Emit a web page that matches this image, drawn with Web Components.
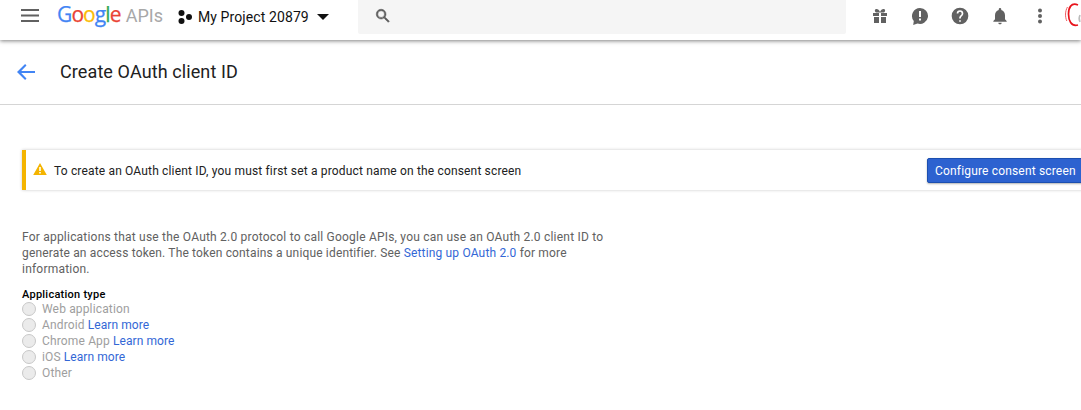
<!DOCTYPE html>
<html>
<head>
<meta charset="utf-8">
<title>Create OAuth client ID</title>
<style>
    html, body { margin: 0; height: 410px; overflow: hidden; background: #fff; }
    body { font-family: Roboto, sans-serif; color: #212121; }
</style>
</head>
<body>
<app-bar></app-bar>
<page-title>Create OAuth client ID</page-title>
<warning-notice>To create an OAuth client ID, you must first set a product name on the consent screen</warning-notice>
<client-form></client-form>

<script>
class AppBar extends HTMLElement
{
    constructor(){
        super();
        this.attachShadow({mode:"open"});
    }

    getStyles(){
        return `
        <style>
            :host {
                display: flex;
                align-items: flex-start;
                height: 40px;
                background: #fff;
                box-shadow: 0 1px 4px rgba(0,0,0,.5);
                position: relative;
            }
            svg { display: block; fill: #616161; }
            .menu { margin: 6px 0 0 20px; width: 20px; height: 20px; }
            .logo {
                margin: 0 0 0 17px;
                width: 106px;
                font: 21px/29px "Open Sans", sans-serif;
                -webkit-text-stroke: .25px;
                letter-spacing: -.9px;
                white-space: nowrap;
            }
            .b { color: #4285f4; } .r { color: #ea4335; } .y { color: #fbbc05; } .g { color: #34a853; }
            .apis { color: #a8a8a8; font: 18px/29px Roboto, sans-serif; -webkit-text-stroke: 0; letter-spacing: 0; margin-left: 5px; }
            .project {
                display: flex;
                align-items: center;
                height: 34px;
                margin-left: 15px;
                width: 180px;
                font-size: 14px;
                letter-spacing: .1px;
                color: #111;
            }
            .project svg { fill: #111; margin-right: 6px; }
            .caret { width: 0; height: 0; margin-left: 8px; border: 6px solid transparent; border-top: 6px solid #111; border-bottom: 0; }
            .search {
                width: 488px;
                height: 34px;
                background: #f5f5f5;
                box-sizing: border-box;
                padding: 7px 0 0 16px;
                border-radius: 0 0 2px 2px;
            }
            .search svg { fill: #5a5a5a; stroke: #5a5a5a; stroke-width: .7; }
            .icons { display: flex; margin-left: 24px; gap: 20px; padding-top: 6px; }
            .avatar { position: absolute; right: 0; top: 0; fill: none; }
        </style>
        `;
    }

    getTemplate(){
        let template = document.createElement("template");
        template.innerHTML =
        `
        <svg class="menu" viewBox="0 0 20 20"><path d="M1 3h18v2H1zM1 8.500h18v2H1zM1 14h18v2H1z"/></svg>
        <div class="logo"><span class="b">G</span><span class="r">o</span><span class="y">o</span><span class="b">g</span><span class="g">l</span><span class="r">e</span><span class="apis">APIs</span></div>
        <div class="project">
            <svg width="14" height="14" viewBox="0 0 14 14"><circle cx="3.500" cy="3" r="3"/><circle cx="3.500" cy="11" r="3"/><circle cx="11" cy="7" r="3"/></svg>
            My Project 20879
            <span class="caret"></span>
        </div>
        <div class="search">
            <svg width="18" height="18" viewBox="0 0 24 24"><path d="M15.500 14h-.79l-.28-.27A6.470 6.470 0 0 0 16 9.500 6.500 6.500 0 1 0 9.500 16c1.610 0 3.090-.59 4.230-1.570l.27.28v.79l5 4.990L20.490 19l-4.990-5zm-6 0a4.500 4.500 0 1 1 0-9 4.500 4.500 0 0 1 0 9z"/></svg>
        </div>
        <div class="icons">
            <svg width="20" height="20" viewBox="0 0 20 20"><path d="M3 7h6v3H3zM11 7h6v3h-6zM4 11h5v6H4zM11 11h5v6h-5zM6.500 3c1.500 0 2.700 1.200 3.500 3 .8-1.800 2-3 3.500-3 2 0 2.200 2.600.5 3.500H6C4.300 5.600 4.500 3 6.500 3z"/></svg>
            <svg width="20" height="20" viewBox="0 0 20 20"><path d="M10 2a8 8 0 1 1-2.500 15.600L3.200 19l.6-4A8 8 0 0 1 10 2zM9 5v6h2V5zm0 7.500v2h2v-2z" fill-rule="evenodd"/></svg>
            <svg width="20" height="20" viewBox="0 0 24 24"><path d="M12 2a10 10 0 1 0 0 20 10 10 0 0 0 0-20zm1 17h-2v-2h2v2zm2.070-7.750-.9.920C13.450 12.900 13 13.500 13 15h-2v-.5c0-1.100.45-2.100 1.170-2.830l1.240-1.260c.37-.36.59-.86.59-1.410a2 2 0 0 0-4 0H8a4 4 0 0 1 8 0c0 .88-.36 1.680-.93 2.250z"/></svg>
            <svg width="20" height="20" viewBox="0 0 24 24"><path d="M12 22c1.100 0 2-.9 2-2h-4c0 1.100.9 2 2 2zm6-6v-5c0-3.100-1.600-5.600-4.500-6.300V4a1.500 1.500 0 0 0-3 0v.7C7.600 5.400 6 7.900 6 11v5l-2 2v1h16v-1l-2-2z"/></svg>
            <svg width="20" height="20" viewBox="0 0 20 20"><circle cx="10" cy="4.500" r="2"/><circle cx="10" cy="10" r="2"/><circle cx="10" cy="15.500" r="2"/></svg>
        </div>
        <svg class="avatar" width="16" height="30" viewBox="0 0 16 30"><path d="M13 5C6 2 3.500 8 3.500 14S6 27 13 25" stroke="#e8141c" stroke-width="1.700"/><path d="M2.500 7C0 11 0 17 1.800 21" stroke="#ef5a5f"/><path d="M15 15c-1 2-1 5 0 7" stroke="#bbb" stroke-width="1.500"/></svg>
        ${this.getStyles()}
        `;
        return template;
    }

    connectedCallback(){
        this.shadowRoot.appendChild(this.getTemplate().content.cloneNode(true));
    }
}

class PageTitle extends HTMLElement
{
    constructor(){
        super();
        this.attachShadow({mode:"open"});
        this.shadowRoot.innerHTML =
        `
        <style>
            :host {
                display: flex;
                align-items: center;
                height: 64px;
                border-bottom: 1px solid #d5d5d5;
                padding-left: 17px;
            }
            svg { display: block; fill: #4285f4; margin-right: 25px; }
            h1 { margin: -2px 0 0; font: 400 18px Roboto, sans-serif; color: #212121; letter-spacing: .1px; }
        </style>
        <svg width="18" height="18" viewBox="0 0 18 18"><path d="M18 8H4.200l5.300-5.600L8.100 1 0 9l8.100 8 1.400-1.400L4.200 10H18z"/></svg>
        <h1><slot></slot></h1>
        `;
    }
}

class WarningNotice extends HTMLElement
{
    constructor(){
        super();
        this.attachShadow({mode:"open"});
        this.shadowRoot.innerHTML =
        `
        <style>
            :host {
                display: flex;
                align-items: center;
                box-sizing: border-box;
                width: 1091px;
                height: 40px;
                margin: 45px 0 0 22px;
                padding-left: 7px;
                background: #fff;
                border-left: 4px solid #f4b400;
                box-shadow: 0 0 3px rgba(0,0,0,.22);
                font-size: 12px;
                letter-spacing: .165px;
                color: #212121;
            }
            svg { display: block; fill: #f4b400; margin: -2px 7px 0 0; flex: none; }
            .text { flex: 1; white-space: nowrap; padding-top: 2px; }
            button {
                width: 170px;
                height: 25px;
                margin-right: 16px;
                padding: 2px 7px 0;
                border: 1px solid #1c4fb0;
                border-radius: 2px;
                background: #2d62d0;
                color: #fff;
                font: 12px Roboto, sans-serif;
                letter-spacing: .17px;
                text-align: left;
                box-shadow: 0 1px 2px rgba(0,0,0,.3);
            }
        </style>
        <svg width="14" height="14" viewBox="0 0 14 14"><path d="M7 1 .2 13h13.600zM6.200 5h1.600v4H6.200zm0 5h1.600v1.600H6.200z" fill-rule="evenodd"/></svg>
        <div class="text"><slot></slot></div>
        <button>Configure consent screen</button>
        `;
    }
}

class RadioRow extends HTMLElement
{
    constructor(){
        super();
        this.attachShadow({mode:"open"});
        this.shadowRoot.innerHTML =
        `
        <style>
            :host {
                display: flex;
                align-items: center;
                height: 16px;
                font-size: 12px;
                letter-spacing: .15px;
                color: #9e9e9e;
            }
            .dot {
                box-sizing: border-box;
                width: 14px;
                height: 14px;
                margin-right: 6px;
                border: 1px solid #c8c8c8;
                border-radius: 50%;
                background: #ebebeb;
            }
            ::slotted(a) { color: #3367d6; text-decoration: none; margin-left: 3px; letter-spacing: .08px; }
        </style>
        <span class="dot"></span><span>${this.getAttribute("label")}</span><slot></slot>
        `;
    }
}

class ClientForm extends HTMLElement
{
    constructor(){
        super();
        this.attachShadow({mode:"open"});
        this.shadowRoot.innerHTML =
        `
        <style>
            :host { display: block; margin: 39px 0 0 22px; width: 600px; font-size: 12px; color: #616161; }
            .intro div { line-height: 16px; white-space: nowrap; letter-spacing: .21px; }
            .intro .second { letter-spacing: .16px; }
            a { color: #3367d6; text-decoration: none; }
            h2 { margin: 11px 0 0; font: 500 11px/13px Roboto, sans-serif; color: #000; letter-spacing: .25px; }
        </style>
        <div class="intro">
            <div>For applications that use the OAuth 2.0 protocol to call Google APIs, you can use an OAuth 2.0 client ID to</div>
            <div class="second">generate an access token. The token contains a unique identifier. See <a>Setting up OAuth 2.0</a> for more</div>
            <div>information.</div>
        </div>
        <h2>Application type</h2>
        <radio-row label="Web application"></radio-row>
        <radio-row label="Android"><a>Learn more</a></radio-row>
        <radio-row label="Chrome App"><a>Learn more</a></radio-row>
        <radio-row label="iOS"><a>Learn more</a></radio-row>
        <radio-row label="Other"></radio-row>
        `;
    }
}

customElements.define('app-bar',AppBar);
customElements.define('page-title',PageTitle);
customElements.define('warning-notice',WarningNotice);
customElements.define('radio-row',RadioRow);
customElements.define('client-form',ClientForm);
</script>
</body>
</html>
